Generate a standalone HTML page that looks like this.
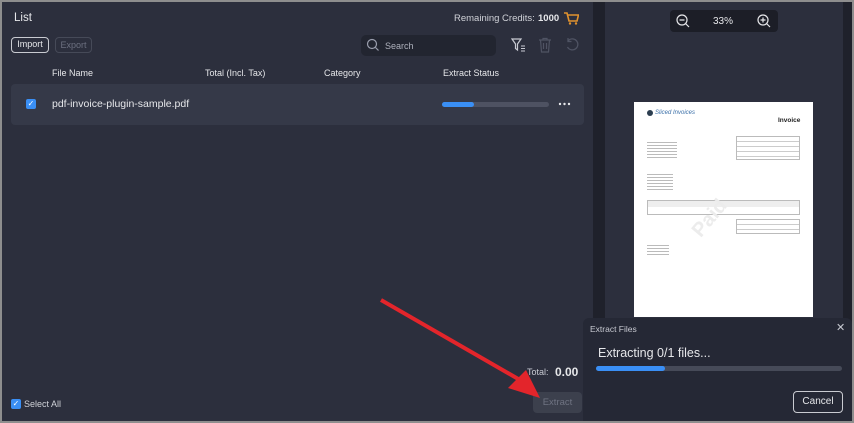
<!DOCTYPE html><html><head><style>
*{box-sizing:border-box;margin:0;padding:0}
body{width:854px;height:423px;background:#8e8e8e;font-family:"Liberation Sans",sans-serif;overflow:hidden;position:relative}
.main{position:absolute;left:2px;top:2px;width:850px;height:419px;background:#1f212b}
.left{position:absolute;left:2px;top:2px;width:591px;height:419px;background:#2c2f3d}
.prev{position:absolute;left:605px;top:2px;width:238px;height:419px;background:#2c2f3d}
.t{position:absolute;color:#e6e7ea;white-space:nowrap}
.btn{position:absolute;border-radius:4px;font-size:9px;text-align:center}
</style></head><body>
<div class="main"></div>
<div class="left"></div>
<div class="prev"></div>
<div class="t" style="left:14px;top:12px;font-size:11.5px">List</div>
<div class="t" style="left:454px;top:13px;font-size:9.5px;color:#d0d2d8">Remaining Credits:</div>
<div class="t" style="left:538px;top:13px;font-size:9.5px;font-weight:bold">1000</div>
<svg style="position:absolute;left:563px;top:11px" width="16" height="15" viewBox="0 0 16 15"><path d="M1 2h3l2 8h8l1.5-6H5" fill="none" stroke="#e0922e" stroke-width="1.6"/><circle cx="7" cy="12.5" r="1.2" fill="#e0922e"/><circle cx="13" cy="12.5" r="1.2" fill="#e0922e"/></svg>
<div class="btn" style="left:11px;top:37px;width:38px;height:16px;border:1.5px solid #c9cbd1;color:#e6e7ea;line-height:13px">Import</div>
<div class="btn" style="left:55px;top:37px;width:37px;height:16px;border:1px solid #464a58;color:#6c7080;line-height:14px">Export</div>
<div style="position:absolute;left:361px;top:35px;width:135px;height:21px;background:#222530;border-radius:5px"></div>
<svg style="position:absolute;left:366px;top:38px" width="14" height="14"><circle cx="6" cy="6" r="4.5" fill="none" stroke="#9a9ead" stroke-width="1.2"/><path d="M9.5 9.5l3 3" stroke="#9a9ead" stroke-width="1.2"/></svg>
<div class="t" style="left:385px;top:41px;font-size:9px;color:#aeb1bc">Search</div>
<svg style="position:absolute;left:511px;top:37px" width="16" height="16"><path d="M1 2h9l-3.5 5v6l-2-1.5V7z" fill="none" stroke="#c8cad2" stroke-width="1.2"/><path d="M10 9h4M10 11.5h4M10 14h4" stroke="#c8cad2" stroke-width="1"/></svg>
<svg style="position:absolute;left:538px;top:37px" width="14" height="16"><path d="M1 3h12M5 3V1.5h4V3M2.5 3l1 12h7l1-12M5.5 6v6M8.5 6v6" fill="none" stroke="#4f5363" stroke-width="1.2"/></svg>
<svg style="position:absolute;left:565px;top:37px" width="15" height="15"><path d="M3 4A5.5 5.5 0 1 1 2.5 10M3 1v3.5h3.5" fill="none" stroke="#4f5363" stroke-width="1.3"/></svg>
<div class="t" style="left:52px;top:68px;font-size:9px">File Name</div>
<div class="t" style="left:205px;top:68px;font-size:9px">Total (Incl. Tax)</div>
<div class="t" style="left:324px;top:68px;font-size:9px">Category</div>
<div class="t" style="left:443px;top:68px;font-size:9px">Extract Status</div>
<div style="position:absolute;left:11px;top:84px;width:573px;height:41px;background:#353948;border-radius:4px"></div>
<div style="position:absolute;left:26px;top:99px;width:10px;height:10px;background:#3a8ff5;border-radius:2px;color:#fff;font-size:8px;line-height:10px;text-align:center">✓</div>
<div class="t" style="left:52px;top:98px;font-size:10.5px">pdf-invoice-plugin-sample.pdf</div>
<div style="position:absolute;left:442px;top:102px;width:107px;height:5px;background:#4e5262;border-radius:3px"></div>
<div style="position:absolute;left:442px;top:102px;width:32px;height:5px;background:#3a8ff5;border-radius:3px"></div>
<svg style="position:absolute;left:558px;top:102px" width="14" height="4"><circle cx="2" cy="2" r="1.2" fill="#e6e7ea"/><circle cx="6.5" cy="2" r="1.2" fill="#e6e7ea"/><circle cx="11" cy="2" r="1.2" fill="#e6e7ea"/></svg>
<div class="t" style="left:527px;top:367px;font-size:9px;color:#c8cad2">Total:</div>
<div class="t" style="left:555px;top:365px;font-size:12px;font-weight:bold">0.00</div>
<div style="position:absolute;left:11px;top:399px;width:10px;height:10px;background:#3a8ff5;border-radius:2px;color:#fff;font-size:8px;line-height:10px;text-align:center">✓</div>
<div class="t" style="left:24px;top:399px;font-size:9px;color:#d0d2d8">Select All</div>
<div class="btn" style="left:533px;top:392px;width:49px;height:21px;background:#3c404d;color:#6f7382;line-height:21px;font-size:9.5px">Extract</div>
<svg style="position:absolute;left:0;top:0" width="600" height="423"><path d="M381 300L520 380" stroke="#e3252b" stroke-width="4"/><path d="M508 388L540 398L526 370z" fill="#e3252b"/></svg>
<div style="position:absolute;left:670px;top:10px;width:108px;height:22px;background:#1c1e27;border-radius:4px"></div>
<svg style="position:absolute;left:676px;top:14px" width="14" height="14"><circle cx="6" cy="6" r="5" fill="none" stroke="#e6e7ea" stroke-width="1.2"/><path d="M3.5 6h5M9.5 9.5l3.5 3.5" stroke="#e6e7ea" stroke-width="1.2"/></svg>
<div class="t" style="left:713px;top:16px;font-size:10px">33%</div>
<svg style="position:absolute;left:757px;top:14px" width="14" height="14"><circle cx="6" cy="6" r="5" fill="none" stroke="#e6e7ea" stroke-width="1.2"/><path d="M3.5 6h5M6 3.5v5M9.5 9.5l3.5 3.5" stroke="#e6e7ea" stroke-width="1.2"/></svg>
<div style="position:absolute;left:634px;top:102px;width:179px;height:215px;background:#fff">
<div style="position:absolute;left:13px;top:8px;width:6px;height:6px;border-radius:50%;background:#2c3e50"></div>
<div style="position:absolute;left:21px;top:8px;font-size:6px;color:#3a6fa8;font-style:italic">Sliced Invoices</div>
<div style="position:absolute;left:144px;top:15px;font-size:6.5px;font-weight:bold;color:#222">Invoice</div>
<div style="position:absolute;left:102px;top:34px;width:64px;height:24px;border:1px solid #bbb;background:repeating-linear-gradient(#fff 0 4px,#ccc 4px 5px)"></div>
<div style="position:absolute;left:13px;top:38px;width:30px;height:20px;background:repeating-linear-gradient(#fff 0 2px,#bbb 2px 3px)"></div>
<div style="position:absolute;left:13px;top:70px;width:26px;height:20px;background:repeating-linear-gradient(#fff 0 2px,#bbb 2px 3px)"></div>
<div style="position:absolute;left:13px;top:98px;width:153px;height:15px;border:1px solid #bbb;background:linear-gradient(#eee 0 6px,#fff 6px)"></div>
<div style="position:absolute;left:102px;top:117px;width:64px;height:15px;border:1px solid #bbb;background:repeating-linear-gradient(#fff 0 4px,#ccc 4px 5px)"></div>
<div style="position:absolute;left:13px;top:141px;width:22px;height:12px;background:repeating-linear-gradient(#fff 0 2px,#bbb 2px 3px)"></div>
<div style="position:absolute;left:55px;top:105px;font-size:20px;font-weight:bold;color:#ececec;transform:rotate(-50deg)">Paid</div>
</div>
<div style="position:absolute;left:583px;top:318px;width:269px;height:103px;background:#252835;border-radius:6px 6px 0 0"></div>
<div class="t" style="left:590px;top:324px;font-size:8.5px;color:#c8cad2">Extract Files</div>
<div class="t" style="left:836px;top:321px;font-size:11px;color:#c8cad2">✕</div>
<div class="t" style="left:598px;top:346px;font-size:12.5px">Extracting 0/1 files...</div>
<div style="position:absolute;left:596px;top:366px;width:246px;height:5px;background:#464a58;border-radius:3px"></div>
<div style="position:absolute;left:596px;top:366px;width:69px;height:5px;background:#3a8ff5;border-radius:3px"></div>
<div class="btn" style="left:793px;top:391px;width:50px;height:22px;border:1.5px solid #c9cbd1;color:#e6e7ea;line-height:19px;font-size:10px">Cancel</div>
</body></html>
